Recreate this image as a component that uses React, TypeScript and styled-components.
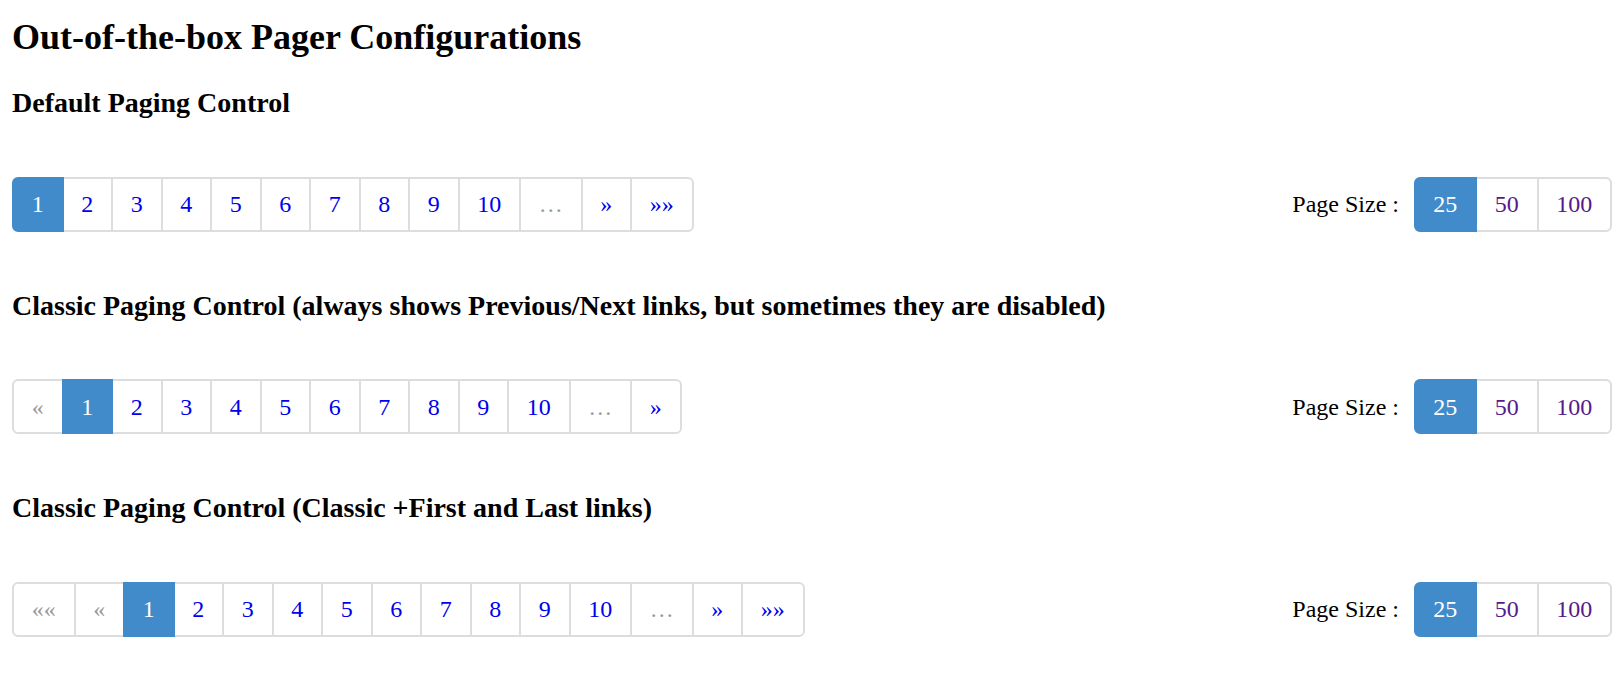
import React from 'react';
import styled, { createGlobalStyle } from 'styled-components';

const GlobalStyle = createGlobalStyle`
  html, body {
    margin: 0;
    padding: 0;
    background: #ffffff;
  }
  body {
    font-family: "Liberation Serif", "Times New Roman", serif;
    font-size: 24px;
    color: #000000;
  }
`;

const Page = styled.div`
  padding: 17px 11px 0 12px;
`;

const Title = styled.h2`
  margin: 0 0 29px;
  font-size: 36px;
  line-height: 41px;
  font-weight: bold;
`;

const Section = styled.section`
  display: flex;
  flex-direction: column;
`;

const Heading = styled.h3`
  margin: 0;
  font-size: 28px;
  line-height: 32px;
  font-weight: bold;
`;

const Row = styled.div`
  display: flex;
  justify-content: space-between;
  align-items: center;
  margin: 57.5px 0 58px;
`;

const Pager = styled.ul`
  display: flex;
  list-style: none;
  margin: 0;
  padding: 0;
`;

const Item = styled.li`
  display: flex;
  margin-left: -2px;
  &:first-child {
    margin-left: 0;
  }
  &:first-child > a {
    border-radius: 6px 0 0 6px;
  }
  &:last-child > a {
    border-radius: 0 6px 6px 0;
  }
`;

type CellState = 'active' | 'disabled' | 'link' | 'visited';

const colors: Record<CellState, string> = {
  active: '#ffffff',
  disabled: '#999999',
  link: '#0000ee',
  visited: '#551a8b',
};

const Cell = styled.a<{ $state: CellState }>`
  position: relative;
  z-index: ${(p) => (p.$state === 'active' ? 2 : 1)};
  display: block;
  padding: 8.5px 17.75px;
  line-height: 34px;
  font-size: 24px;
  text-decoration: none;
  white-space: nowrap;
  cursor: ${(p) => (p.$state === 'disabled' || p.$state === 'active' ? 'default' : 'pointer')};
  color: ${(p) => colors[p.$state]};
  background: ${(p) => (p.$state === 'active' ? '#428bca' : '#ffffff')};
  border: 2px solid ${(p) => (p.$state === 'active' ? '#428bca' : '#dddddd')};
`;

const SizeBox = styled.div`
  display: flex;
  align-items: center;
  gap: 14.5px;
`;

const SizeLabel = styled.span`
  font-size: 24px;
  line-height: 34px;
  color: #000000;
`;

type Entry = { label: string; state: CellState };

const digits = (activeIndex: number): Entry[] =>
  Array.from({ length: 10 }, (_, i) => ({
    label: String(i + 1),
    state: i === activeIndex ? 'active' : 'link',
  }));

const pagers: { title: string; items: Entry[] }[] = [
  {
    title: 'Default Paging Control',
    items: [
      ...digits(0),
      { label: '…', state: 'disabled' },
      { label: '»', state: 'link' },
      { label: '»»', state: 'link' },
    ],
  },
  {
    title: 'Classic Paging Control (always shows Previous/Next links, but sometimes they are disabled)',
    items: [
      { label: '«', state: 'disabled' },
      ...digits(0),
      { label: '…', state: 'disabled' },
      { label: '»', state: 'link' },
    ],
  },
  {
    title: 'Classic Paging Control (Classic +First and Last links)',
    items: [
      { label: '««', state: 'disabled' },
      { label: '«', state: 'disabled' },
      ...digits(0),
      { label: '…', state: 'disabled' },
      { label: '»', state: 'link' },
      { label: '»»', state: 'link' },
    ],
  },
];

const sizes: Entry[] = [
  { label: '25', state: 'active' },
  { label: '50', state: 'visited' },
  { label: '100', state: 'visited' },
];

const PagerList: React.FC<{ items: Entry[] }> = ({ items }) => (
  <Pager>
    {items.map((it, i) => (
      <Item key={i}>
        <Cell $state={it.state} href={it.state === 'link' || it.state === 'visited' ? '#' : undefined}>
          {it.label}
        </Cell>
      </Item>
    ))}
  </Pager>
);

export default function App() {
  return (
    <Page>
      <GlobalStyle />
      <Title>Out-of-the-box Pager Configurations</Title>
      {pagers.map((p) => (
        <Section key={p.title}>
          <Heading>{p.title}</Heading>
          <Row>
            <PagerList items={p.items} />
            <SizeBox>
              <SizeLabel>Page Size :</SizeLabel>
              <PagerList items={sizes} />
            </SizeBox>
          </Row>
        </Section>
      ))}
    </Page>
  );
}
